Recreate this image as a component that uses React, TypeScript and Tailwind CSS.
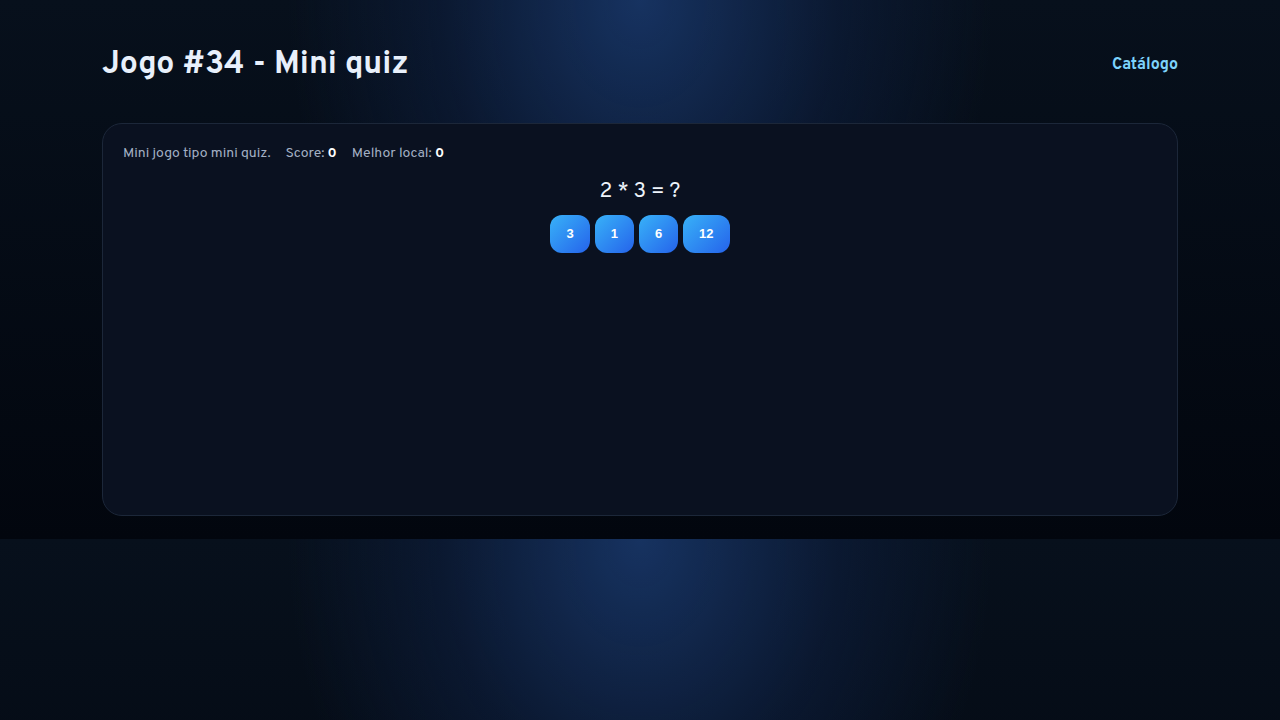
const choices = [3, 1, 6, 12];

export default function App() {
  return (
    <div className="min-h-screen bg-[radial-gradient(ellipse_440px_560px_at_50%_0%,rgba(24,54,104,0.9),rgba(14,32,66,0.55)_45%,transparent_80%),linear-gradient(#07101c,#02060e)] bg-[length:100%_539px] bg-repeat text-slate-100 font-['Overpass','Noto_Sans',sans-serif]">
      <div className="mx-auto max-w-[1076px] pt-10 pb-[23px]">
        <header className="flex items-center justify-between h-[46px] mb-[37px]">
          <h1 className="text-[32px] font-bold text-[#e8f0fb] pt-1">Jogo #34 - Mini quiz</h1>
          <a href="#" className="text-[16px] font-bold text-[#7dd3fc] pt-1">
            Catálogo
          </a>
        </header>
        <main className="h-[393px] rounded-[20px] border border-[#1c2739] bg-[#0a1120] px-5 py-[20px]">
          <p className="text-[14px] text-[#a3b0c4] leading-5">
            Mini jogo tipo mini quiz.
            <span className="ml-[15px]">
              Score: <b className="text-white">0</b>
            </span>
            <span className="ml-[15px]">
              Melhor local: <b className="text-white">0</b>
            </span>
          </p>
          <div className="mt-[14px] text-center text-[21px] leading-7 text-[#eef3fa]">2 * 3 = ?</div>
          <div className="mt-[9px] flex justify-center gap-[5px]">
            {choices.map((c) => (
              <button
                key={c}
                className="h-[38px] px-4 rounded-xl bg-[linear-gradient(135deg,#38b2f8,#2563eb)] text-white text-[13px] font-bold font-['Liberation_Sans',Arial,sans-serif]"
              >
                {c}
              </button>
            ))}
          </div>
        </main>
      </div>
    </div>
  );
}
